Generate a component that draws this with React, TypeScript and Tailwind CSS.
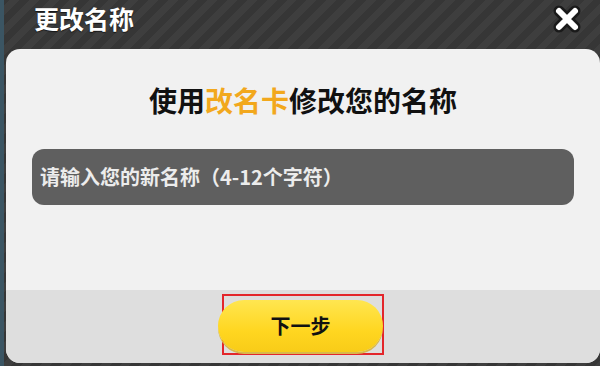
const cjk = "font-['Noto_Sans_CJK_SC','Noto_Sans',sans-serif]";

function CloseIcon() {
  return (
    <svg width="30" height="30" viewBox="0 0 30 30" className="block">
      <g strokeLinecap="round">
        <path d="M7 7 L23 23 M23 7 L7 23" stroke="#1a1a1a" strokeWidth="11" />
        <path d="M7 7 L23 23 M23 7 L7 23" stroke="#ffffff" strokeWidth="6" />
      </g>
    </svg>
  );
}

export default function App() {
  return (
    <div
      className={`relative h-[366px] w-[600px] overflow-hidden bg-[#393939] bg-[image:repeating-linear-gradient(135deg,#363636_0px,#363636_7px,#3e3e3e_7px,#3e3e3e_14px)] ${cjk}`}
    >
      <div className="flex h-full">
        <div className="w-[4px] bg-[#3b5563]" />
        <div className="flex flex-1 flex-col pl-[2px]">
          <header className="flex h-[49px] items-start justify-between pl-[28px] pr-[18px] pt-[1px]">
            <h1 className="text-[25px] font-bold leading-[34px] text-white [text-shadow:0_1px_1px_rgba(0,0,0,0.6)]">
              更改名称
            </h1>
            <div className="mt-[3px]">
              <CloseIcon />
            </div>
          </header>

          <div className="flex h-[314px] flex-col overflow-hidden rounded-[14px] bg-[#f1f1f1]">
            <div className="flex h-[241px] flex-col px-[26px]">
              <p className="mt-[32px] text-center text-[28px] font-bold leading-[38px] text-[#111]">
                使用<span className="text-[#f2a81d]">改名卡</span>修改您的名称
              </p>
              <div className="mt-[30px] flex h-[56px] items-center rounded-[12px] bg-[#5f5f5f] pl-[8px]">
                <span className="text-[20px] font-semibold text-[#ececec]">
                  请输入您的新名称（4-12个字符）
                </span>
              </div>
            </div>

            <div className="flex flex-1 justify-center bg-[#dedede] pt-[4px]">
              <div className="flex h-[61px] w-[162px] border-2 border-[#e3262b]">
                <button className="-ml-[6px] mt-[4px] flex h-[52px] w-[165px] shrink-0 items-center justify-center rounded-full bg-[linear-gradient(#ffe650,#ffd620_60%,#f8cc18)] shadow-[0_2px_0_#d9b84a] text-[20px] font-bold text-[#111]">
                  下一步
                </button>
              </div>
            </div>
          </div>
        </div>
      </div>
    </div>
  );
}
